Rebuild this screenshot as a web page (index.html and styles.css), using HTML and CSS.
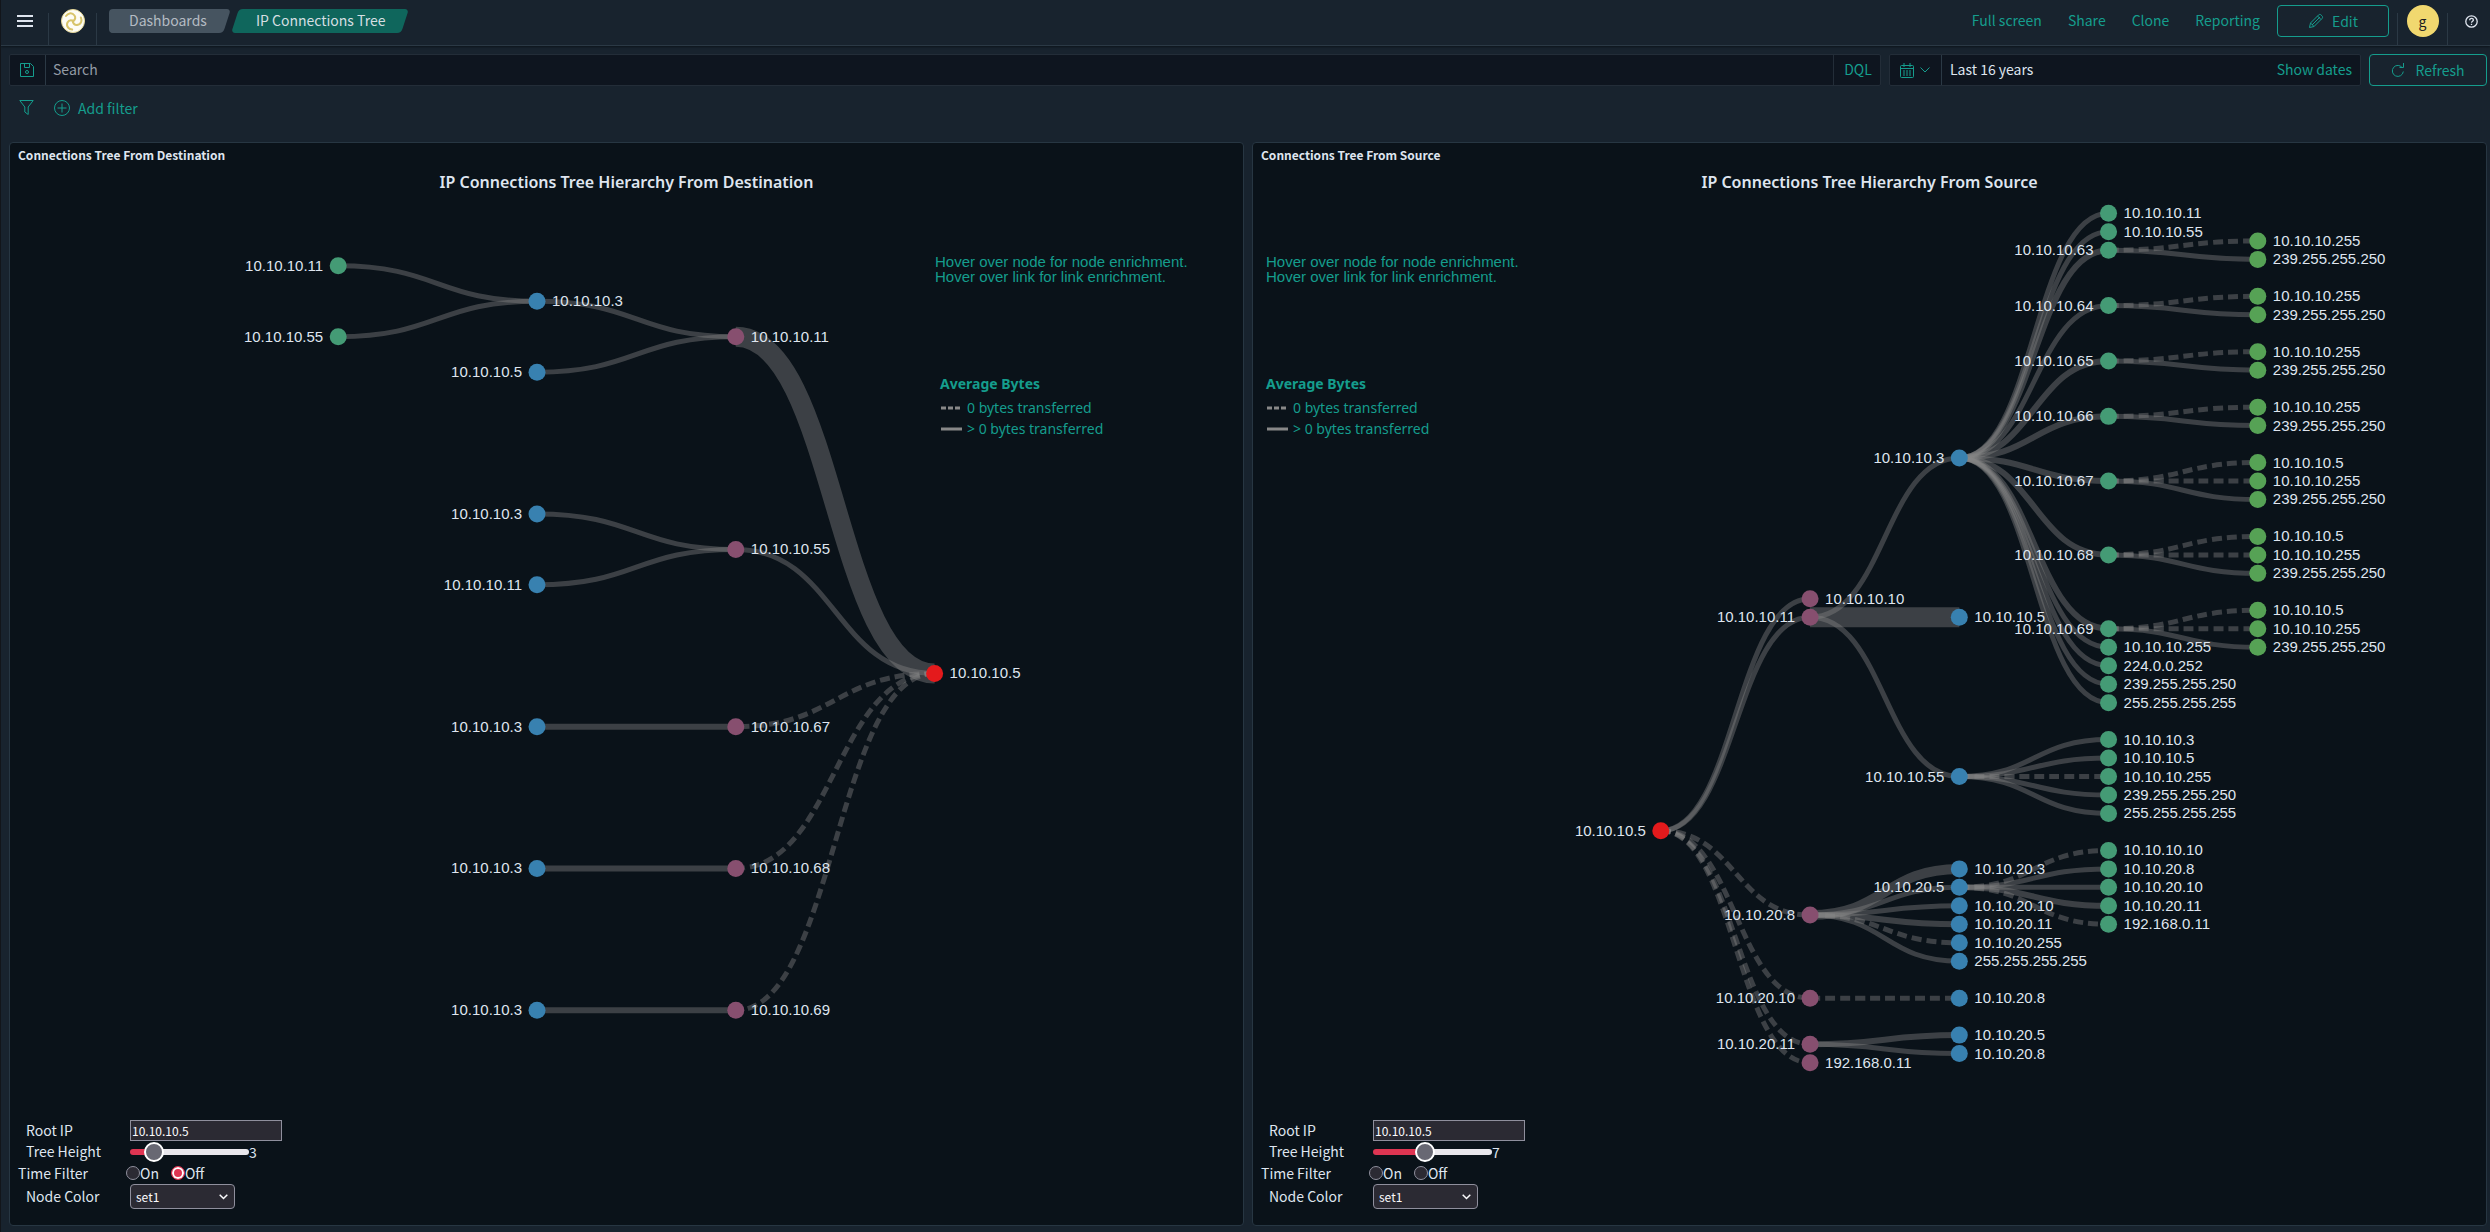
FILE: index.html
```html
<!DOCTYPE html>
<html lang="en">
<head>
<meta charset="utf-8">
<title>IP Connections Tree</title>
<link rel="stylesheet" href="styles.css">
</head>
<body>
<header class="topbar">
  <button class="icon-btn menu-btn" type="button" aria-label="Toggle navigation">
    <svg width="16" height="12" viewBox="0 0 16 12"><path d="M0 0h16v2H0zM0 5h16v2H0zM0 10h16v2H0z" fill="currentColor"/></svg>
  </button>
  <a class="brand" href="#" aria-label="Home">
    <svg width="24" height="24" viewBox="0 0 24 24" fill="none" stroke="#d8c46a">
      <circle cx="12" cy="12" r="11.5" fill="#fdfcf4" stroke="#e6d897"/>
      <g stroke-width="2" stroke-linecap="round">
        <path id="arm" d="M12 12.500Q15.500 9.500 13.500 6.500Q11.500 3.800 8.500 4.500Q6.500 5 5 7"/>
        <use href="#arm" transform="rotate(120 12 12)"/>
        <use href="#arm" transform="rotate(240 12 12)"/>
      </g>
    </svg>
  </a>
  <nav class="crumbs" aria-label="Breadcrumbs">
    <a class="crumb crumb-first" href="#">Dashboards</a>
    <a class="crumb crumb-current" href="#" aria-current="page">IP Connections Tree</a>
  </nav>
  <nav class="actions" aria-label="Dashboard actions">
    <a href="#">Full screen</a>
    <a href="#">Share</a>
    <a href="#">Clone</a>
    <a href="#">Reporting</a>
  </nav>
  <button class="outline-btn edit-btn" type="button">
    <svg width="16" height="16" viewBox="0 0 16 16" fill="none" stroke="currentColor"><path d="M1.500 14.500l1-4.500 8-8c.8-.8 1.800-.8 2.600 0l.9.9c.8.8.8 1.800 0 2.600l-8 8zM2.500 10l3.500 3.500M4 12l8-8M9.500 3l3.500 3.500"/></svg>
    Edit
  </button>
  <div class="user"><button class="avatar" type="button">g</button></div>
  <button class="icon-btn help-btn" type="button" aria-label="Help">
    <svg width="13" height="13" viewBox="0 0 13 13" fill="none" stroke="currentColor"><circle cx="6.500" cy="6.500" r="5.700" stroke-width="1.300"/><path d="M4.700 5.200c0-2.400 3.700-2.200 3.700-.2 0 1.300-1.900 1.300-1.900 2.800M6.500 8.800v1.200" stroke-width="1.300"/></svg>
  </button>
</header>

<div class="querybar">
  <div class="search">
    <button class="icon-btn save-btn" type="button" aria-label="Saved queries">
      <svg width="14" height="14" viewBox="0 0 14 14" fill="none" stroke="currentColor"><path d="M.500.500h10l3 3v10H.500zM4.500.500v4h5v-4"/><circle cx="7" cy="9" r="1.500"/></svg>
    </button>
    <input class="search-input" type="text" placeholder="Search" aria-label="Search">
    <button class="dql-btn" type="button">DQL</button>
  </div>
  <div class="dates">
    <button class="icon-btn cal-btn" type="button" aria-label="Date quick select">
      <svg width="14" height="15" viewBox="0 0 14 15" fill="none" stroke="currentColor"><rect x=".5" y="2.500" width="13" height="12" rx="1"/><path d="M.5 5.500h13M4 0v4M10 0v4"/><path d="M3 8h8M3 10h8M3 12h8" stroke-dasharray="2 1"/></svg>
      <svg width="10" height="6" viewBox="0 0 10 6" fill="none" stroke="currentColor"><path d="M.5.500L5 5 9.500.500"/></svg>
    </button>
    <button class="range-btn" type="button">Last 16 years</button>
    <button class="show-btn" type="button">Show dates</button>
  </div>
  <button class="outline-btn refresh-btn" type="button">
    <svg width="14" height="14" viewBox="0 0 14 14" fill="none" stroke="currentColor"><path d="M11.500 5A5.500 5.500 0 1 0 12.300 8.500M12.500 0v4.500H8.500"/></svg>
    Refresh
  </button>
</div>

<div class="filters">
  <button class="icon-btn" type="button" aria-label="Filter options">
    <svg width="15" height="15" viewBox="0 0 15 15" fill="none" stroke="currentColor"><path d="M.800.500h13.400l-5 6.500v7.500l-3.400-2.500V7z"/></svg>
  </button>
  <button class="add-filter" type="button">
    <svg width="16" height="16" viewBox="0 0 16 16" fill="none" stroke="currentColor"><circle cx="8" cy="8" r="7.500"/><path d="M3.500 8h9M8 3.500v9"/></svg>
    Add filter
  </button>
</div>

<main class="grid">
  <section class="panel">
    <h2 class="panel-title">Connections Tree From Destination</h2>
    <h3 class="chart-title">IP Connections Tree Hierarchy From Destination</h3>
    <svg class="chart" id="tree-destination" viewBox="0 0 1233 923" role="img" aria-label="Tree of connections from destination"></svg>
    <form class="controls">
      <label for="root-a">Root IP</label>
      <input class="root-input" id="root-a" type="text" value="10.10.10.5">
      <label for="height-a">Tree Height</label>
      <div class="field"><input class="slider" id="height-a" type="range" min="1" max="15" value="3" style="--fill: 20%"><output for="height-a">3</output></div>
      <span class="group-label" id="time-a">Time Filter</span>
      <div class="field radios" role="radiogroup" aria-labelledby="time-a">
        <label><input type="radio" name="time-a">On</label>
        <label><input type="radio" name="time-a" checked>Off</label>
      </div>
      <label for="color-a">Node Color</label>
      <div class="field select"><select id="color-a"><option>set1</option></select><svg width="9" height="6" viewBox="0 0 9 6" fill="none" stroke="#fbfbfe" stroke-width="1.500"><path d="M.7.700l3.800 3.800L8.300.700"/></svg></div>
    </form>
  </section>

  <section class="panel">
    <h2 class="panel-title">Connections Tree From Source</h2>
    <h3 class="chart-title">IP Connections Tree Hierarchy From Source</h3>
    <svg class="chart" id="tree-source" viewBox="0 0 1233 923" role="img" aria-label="Tree of connections from source"></svg>
    <form class="controls">
      <label for="root-b">Root IP</label>
      <input class="root-input" id="root-b" type="text" value="10.10.10.5">
      <label for="height-b">Tree Height</label>
      <div class="field"><input class="slider" id="height-b" type="range" min="1" max="15" value="7" style="--fill: 43%"><output for="height-b">7</output></div>
      <span class="group-label" id="time-b">Time Filter</span>
      <div class="field radios" role="radiogroup" aria-labelledby="time-b">
        <label><input type="radio" name="time-b">On</label>
        <label><input type="radio" name="time-b">Off</label>
      </div>
      <label for="color-b">Node Color</label>
      <div class="field select"><select id="color-b"><option>set1</option></select><svg width="9" height="6" viewBox="0 0 9 6" fill="none" stroke="#fbfbfe" stroke-width="1.500"><path d="M.7.700l3.800 3.800L8.300.700"/></svg></div>
    </form>
  </section>
</main>
<script src="tree.js"></script>
</body>
</html>
```
FILE: styles.css
```css
* { box-sizing: border-box; }

body {
  margin: 0;
  border-left: 1px solid #12151a;
  background: #18232e;
  color: #dfe5ef;
  font: 14px/20px "Noto Sans CJK JP", "Noto Sans", sans-serif;
}

button, input, select { font: inherit; color: inherit; }

button {
  padding: 0;
  border: 0;
  background: none;
  color: #159d8d;
  cursor: pointer;
}

a { color: #159d8d; text-decoration: none; }
svg { flex: none; }

.icon-btn {
  display: flex;
  align-items: center;
  justify-content: center;
}

.outline-btn {
  display: flex;
  align-items: center;
  justify-content: center;
  gap: 8px;
  height: 32px;
  padding-bottom: 1px;
  border: 1px solid #159d8d;
  border-radius: 4px;
}

/* Top bar */
.topbar {
  display: flex;
  align-items: center;
  height: 46px;
  padding-bottom: 3px;
  border-bottom: 1px solid #2b3945;
  box-shadow: 0 1px 2px #0c141b;
}

.menu-btn { width: 47px; color: #dfe5ef; }

.brand, .user {
  display: flex;
  align-self: flex-end;
  align-items: flex-start;
  justify-content: center;
  width: 49px;
  height: 32px;
  margin-bottom: -3px;
  border: 1px solid #2b3945;
  border-width: 0 1px;
}

.brand svg { margin-top: -4px; }

.crumbs { display: flex; margin-left: 12px; }

.crumb {
  position: relative;
  z-index: 0;
  height: 24px;
  padding: 1px 23px 3px 25px;
  line-height: 20px;
}

.crumb::before {
  content: "";
  position: absolute;
  z-index: -1;
  inset: 0 4px;
  border-radius: 4px;
  background: #0f665c;
  transform: skewX(-18deg);
}

.crumb-first { padding: 1px 24px 3px 20px; color: #b4bbc3; }
.crumb-first::before { background: #465460; }

.crumb-first::after {
  content: "";
  position: absolute;
  z-index: -1;
  inset: 0 auto 0 0;
  width: 24px;
  border-radius: 4px;
  background: #465460;
}

.crumb-current { color: #d5dfe2; }

.actions {
  display: flex;
  gap: 26px;
  margin: 0 17px 0 auto;
  padding-bottom: 2px;
}

.edit-btn { width: 112px; margin-right: 8px; }
.user { width: 51px; }

.avatar {
  width: 32px;
  height: 32px;
  margin-top: -8px;
  border-radius: 50%;
  background: #f1d86f;
  color: #1a1c21;
  line-height: 32px;
}

.help-btn { width: 42px; padding-left: 4px; color: #dfe5ef; }

/* Query bar */
.querybar {
  display: flex;
  gap: 8px;
  padding: 8px 3px 0 8px;
}

.search, .dates {
  display: flex;
  height: 32px;
  border: 1px solid #232d38;
  border-radius: 2px;
  background: #0e151f;
}

.search { flex: 1; }
.dates { width: 472px; }

.save-btn { width: 36px; padding-right: 1px; border-right: 1px solid #2b3945; }

.search-input {
  flex: 1;
  padding: 0 7px 2px;
  border: 0;
  background: none;
}

.search-input::placeholder { color: #939ba5; opacity: 1; }

.dql-btn, .range-btn, .show-btn { padding-bottom: 2px; }

.dql-btn { width: 47px; padding-left: 2px; border-left: 1px solid #232d38; }

.cal-btn {
  gap: 6px;
  width: 52px;
  padding-right: 2px;
  border-right: 1px solid #2b3945;
}

.range-btn {
  flex: 1;
  padding-left: 8px;
  color: #dfe5ef;
  text-align: left;
}

.show-btn { padding-right: 8px; }
.refresh-btn { width: 118px; gap: 10px; }

/* Filter row */
.filters {
  display: flex;
  align-items: center;
  gap: 20px;
  height: 44px;
  padding: 0 0 1px 18px;
}

.add-filter {
  display: flex;
  align-items: center;
  gap: 8px;
}

/* Panels */
.grid {
  display: grid;
  grid-template-columns: 1fr 1fr;
  gap: 8px;
  padding: 12px 3px 6px 8px;
}

.panel {
  border: 1px solid #273642;
  border-radius: 4px;
  background: #0a1219;
}

.panel-title {
  margin: 0;
  padding-left: 8px;
  font-size: 12px;
  font-weight: 700;
  line-height: 24px;
}

.chart-title {
  margin: 0;
  font: 600 16px/30px "Noto Sans", sans-serif;
  text-align: center;
}

/* Tree chart */
.chart { display: block; width: 100%; height: auto; }

.link {
  fill: none;
  stroke: #888;
  stroke-opacity: .4;
}

.link-empty { stroke-dasharray: 10 5; }

.label {
  fill: #dfe5ef;
  font: 15px "Liberation Sans", sans-serif;
}

.label-before { text-anchor: end; }

.hint {
  fill: #159d8d;
  font: 15px "Liberation Sans", sans-serif;
}

.legend { fill: #159d8d; font: 14px "Noto Sans", sans-serif; }
.legend-title { font-weight: 700; }
.legend-line { stroke: #888; stroke-width: 3px; }
.legend-dashed { stroke-dasharray: 5 2; }

/* Chart controls */
.controls {
  display: grid;
  grid-template-columns: 112px 1fr;
  grid-template-rows: 21px 22px 21px 25px;
  align-items: center;
  padding: 0 8px 16px;
}

.controls > label { padding: 0 0 2px 8px; }
.group-label { padding-bottom: 2px; }

.root-input {
  width: 152px;
  height: 21px;
  padding: 0 1px;
  border: 1px solid #8f8f9d;
  background: #2b2a33;
  color: #fbfbfe;
  font-size: 12px;
}

.field { display: flex; align-items: center; }

.slider {
  width: 119px;
  height: 20px;
  margin: 0;
  background: none;
  appearance: none;
}

.slider::-webkit-slider-runnable-track {
  height: 6px;
  border-radius: 3px;
  background: linear-gradient(90deg, #df3552 var(--fill), #e9e7ec var(--fill));
}

.slider::-webkit-slider-thumb {
  width: 20px;
  height: 20px;
  margin-top: -7px;
  border: 2px solid #fff;
  border-radius: 50%;
  background: #686873;
  appearance: none;
}

.radios { gap: 12px; margin-left: -4px; padding-bottom: 2px; }

.radios label { display: flex; align-items: center; }

.radios input {
  width: 14px;
  height: 14px;
  margin: 0;
  border: 1px solid #8f8f9d;
  border-radius: 50%;
  background: #2b2a33;
  appearance: none;
}

.radios input:checked {
  border: 1px solid #df3552;
  background: #df3552;
  box-shadow: inset 0 0 0 2px #fff;
}

.select { position: relative; width: 105px; }

.select select {
  width: 100%;
  height: 25px;
  padding: 0 5px;
  border: 1px solid #8f8f9d;
  border-radius: 4px;
  background: #2b2a33;
  color: #fbfbfe;
  font-size: 12px;
  appearance: none;
}

.select svg { position: absolute; right: 7px; pointer-events: none; }
```
FILE: tree.js
```js
const SVG = "http://www.w3.org/2000/svg";
const COLORS = ["#e41a1c", "#874f6f", "#3881b0", "#449b75", "#56a255"];

// Node: [ip, row, link width, children]. A width of 0 means no bytes transferred.
const destination = ["10.10.10.5", 5.75, 5, [
  ["10.10.10.11", 1, 20, [
    ["10.10.10.3", 0.5, 5, [["10.10.10.11", 0, 5], ["10.10.10.55", 1, 5]]],
    ["10.10.10.5", 1.5, 5]]],
  ["10.10.10.55", 4, 5, [["10.10.10.3", 3.5, 5], ["10.10.10.11", 4.5, 5]]],
  ["10.10.10.67", 6.5, 0, [["10.10.10.3", 6.5, 6]]],
  ["10.10.10.68", 8.5, 0, [["10.10.10.3", 8.5, 6]]],
  ["10.10.10.69", 10.5, 0, [["10.10.10.3", 10.5, 6]]]]];

const pair = row => [["10.10.10.255", row, 0], ["239.255.255.250", row + 1, 5]];
const triple = row => [["10.10.10.5", row, 0], ["10.10.10.255", row + 1, 0], ["239.255.255.250", row + 2, 5]];

const source = ["10.10.10.5", 33.4375, 5, [
  ["10.10.10.10", 20.875, 5],
  ["10.10.10.11", 21.875, 5, [
    ["10.10.10.3", 13.25, 5, [
      ["10.10.10.11", 0, 5],
      ["10.10.10.55", 1, 5],
      ["10.10.10.63", 2, 6, pair(1.5)],
      ["10.10.10.64", 5, 5, pair(4.5)],
      ["10.10.10.65", 8, 6, pair(7.5)],
      ["10.10.10.66", 11, 6, pair(10.5)],
      ["10.10.10.67", 14.5, 6, triple(13.5)],
      ["10.10.10.68", 18.5, 6, triple(17.5)],
      ["10.10.10.69", 22.5, 6, triple(21.5)],
      ["10.10.10.255", 23.5, 5],
      ["224.0.0.252", 24.5, 5],
      ["239.255.255.250", 25.5, 5],
      ["255.255.255.255", 26.5, 5]]],
    ["10.10.10.5", 21.875, 20],
    ["10.10.10.55", 30.5, 5, [
      ["10.10.10.3", 28.5, 5],
      ["10.10.10.5", 29.5, 5],
      ["10.10.10.255", 30.5, 0],
      ["239.255.255.250", 31.5, 5],
      ["255.255.255.255", 32.5, 5]]]]],
  ["10.10.20.8", 38, 0, [
    ["10.10.20.3", 35.5, 10],
    ["10.10.20.5", 36.5, 5, [
      ["10.10.10.10", 34.5, 0],
      ["10.10.20.8", 35.5, 5],
      ["10.10.20.10", 36.5, 5],
      ["10.10.20.11", 37.5, 6],
      ["192.168.0.11", 38.5, 0]]],
    ["10.10.20.10", 37.5, 5],
    ["10.10.20.11", 38.5, 6],
    ["10.10.20.255", 39.5, 0],
    ["255.255.255.255", 40.5, 5]]],
  ["10.10.20.10", 42.5, 0, [["10.10.20.8", 42.5, 0]]],
  ["10.10.20.11", 45, 0, [["10.10.20.5", 44.5, 6], ["10.10.20.8", 45.5, 5]]],
  ["192.168.0.11", 46, 0]]];

function add(parent, tag, attrs, text) {
  const el = document.createElementNS(SVG, tag);
  for (const name in attrs) el.setAttribute(name, attrs[name]);
  if (text) el.textContent = text;
  parent.append(el);
  return el;
}

function draw(id, root, { x0, dx, y0, dy, hintX, legendX }) {
  const svg = document.getElementById(id);
  const links = add(svg, "g", {});
  const nodes = add(svg, "g", {});

  function visit([ip, row, width, children = []], depth, from) {
    const x = x0 + depth * dx;
    const y = y0 + row * dy;
    if (from) {
      const mid = (from.x + x) / 2;
      add(links, "path", {
        class: width ? "link" : "link link-empty",
        "stroke-width": width || 5,
        d: `M${from.x} ${from.y}C${mid} ${from.y} ${mid} ${y} ${x} ${y}`
      });
    }
    children.forEach(child => visit(child, depth + 1, { x, y }));
    add(nodes, "circle", { cx: x, cy: y, r: 8.5, fill: COLORS[depth] });
    // Labels of inner nodes sit towards the root in a left-to-right tree.
    const before = (children.length > 0) === (dx > 0);
    add(nodes, "text", {
      class: before ? "label label-before" : "label",
      x: before ? x - 15 : x + 15,
      y: y + 5
    }, ip);
  }
  visit(root, 0, null);

  add(svg, "text", { class: "hint", x: hintX, y: 70 }, "Hover over node for node enrichment.");
  add(svg, "text", { class: "hint", x: hintX, y: 85 }, "Hover over link for link enrichment.");
  const legend = add(svg, "g", { class: "legend" });
  add(legend, "text", { class: "legend-title", x: legendX, y: 192 }, "Average Bytes");
  add(legend, "path", { class: "legend-line legend-dashed", d: `M${legendX + 1} 211h20` });
  add(legend, "text", { x: legendX + 27, y: 216 }, "0 bytes transferred");
  add(legend, "path", { class: "legend-line", d: `M${legendX + 1} 232h21` });
  add(legend, "text", { x: legendX + 27, y: 237 }, "> 0 bytes transferred");
}

draw("tree-destination", destination, { x0: 924.6, dx: -198.8, y0: 68.8, dy: 70.9, hintX: 925, legendX: 930 });
draw("tree-source", source, { x0: 407.8, dx: 149.25, y0: 16.2, dy: 18.47, hintX: 13, legendX: 13 });
```
